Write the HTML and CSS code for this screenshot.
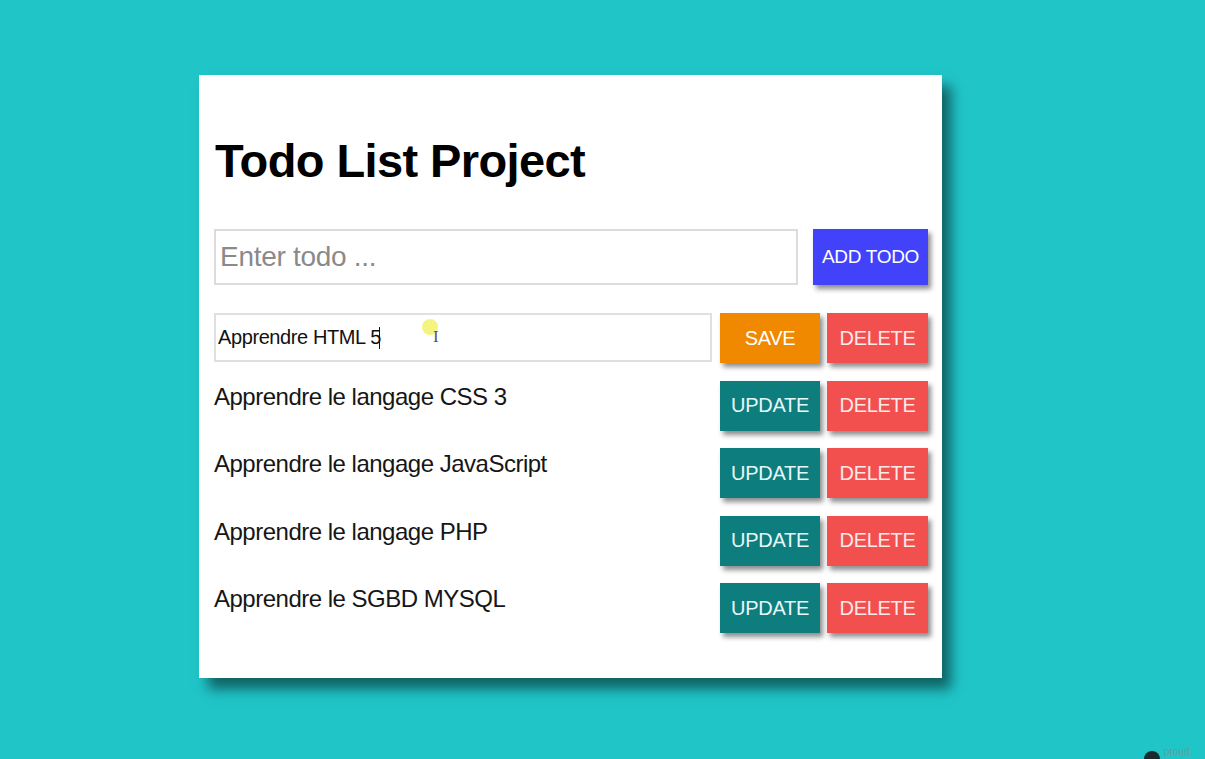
FILE: index.html
```html
<!DOCTYPE html>
<html lang="fr">
<head>
<meta charset="utf-8">
<title>Todo List Project</title>
<link rel="stylesheet" href="styles.css">
</head>
<body>
  <main class="card">
    <h1 class="title">Todo List Project</h1>
    <form class="add-row">
      <input class="add-input" type="text" placeholder="Enter todo ...">
      <button class="btn btn-add" type="button">ADD TODO</button>
    </form>
    <ul class="list">
      <li class="row">
        <div class="edit-wrap">
          <input class="edit-input" type="text" value="Apprendre HTML 5">
          <span class="caret"></span>
          <span class="cursor-dot"></span>
          <span class="ibeam">I</span>
        </div>
        <div class="actions">
          <button class="btn btn-save" type="button">SAVE</button>
          <button class="btn btn-delete" type="button">DELETE</button>
        </div>
      </li>
      <li class="row">
        <span class="item-text">Apprendre le langage CSS 3</span>
        <div class="actions">
          <button class="btn btn-update" type="button">UPDATE</button>
          <button class="btn btn-delete" type="button">DELETE</button>
        </div>
      </li>
      <li class="row">
        <span class="item-text">Apprendre le langage JavaScript</span>
        <div class="actions">
          <button class="btn btn-update" type="button">UPDATE</button>
          <button class="btn btn-delete" type="button">DELETE</button>
        </div>
      </li>
      <li class="row">
        <span class="item-text">Apprendre le langage PHP</span>
        <div class="actions">
          <button class="btn btn-update" type="button">UPDATE</button>
          <button class="btn btn-delete" type="button">DELETE</button>
        </div>
      </li>
      <li class="row">
        <span class="item-text">Apprendre le SGBD MYSQL</span>
        <div class="actions">
          <button class="btn btn-update" type="button">UPDATE</button>
          <button class="btn btn-delete" type="button">DELETE</button>
        </div>
      </li>
    </ul>
  </main>
  <div class="watermark"><span class="wm-dot"></span><span class="wm-text">proud</span></div>
</body>
</html>
```

FILE: styles.css
```css
* {
  box-sizing: border-box;
}

html, body {
  margin: 0;
  height: 100%;
}

body {
  background: #20c5c8;
  font-family: "Liberation Sans", Arial, sans-serif;
  color: #111;
  padding: 75px 0 0 199px;
  overflow: hidden;
  position: relative;
}

.card {
  width: 743px;
  background: #fff;
  padding: 55px 14px 45px 15px;
  box-shadow: 9px 11px 12px rgba(0, 0, 0, 0.5);
}

.title {
  margin: 0 0 37px 1px;
  font-size: 47px;
  line-height: 62px;
  letter-spacing: -0.6px;
  font-weight: bold;
  color: #000;
}

.add-row {
  display: flex;
  gap: 15px;
  margin: 0 0 28px 0;
}

.add-input {
  flex: 0 0 584px;
  height: 56px;
  border: 2px solid #dcdcdc;
  padding: 0 4px;
  font-family: inherit;
  font-size: 28px;
  letter-spacing: -0.3px;
  color: #222;
  outline: none;
}

.add-input::placeholder {
  color: #8a8a8a;
}

.btn {
  border: none;
  color: #fff;
  font-family: inherit;
  font-size: 20px;
  letter-spacing: -0.3px;
  height: 50px;
  padding: 0;
  box-shadow: 3px 4px 5px rgba(0, 0, 0, 0.45);
  cursor: pointer;
}

.btn-add {
  width: 115px;
  height: 56px;
  background: #4242fb;
  font-size: 19px;
}

.list {
  list-style: none;
  margin: 0;
  padding: 0;
  display: flex;
  flex-direction: column;
  gap: 17.5px;
}

.row {
  display: flex;
  align-items: flex-start;
  justify-content: space-between;
  height: 50px;
}

.edit-wrap {
  position: relative;
  width: 498px;
}

.edit-input {
  width: 498px;
  height: 49px;
  border: 2px solid #e0e0e0;
  padding: 0 2px;
  font-family: inherit;
  font-size: 20px;
  letter-spacing: -0.4px;
  color: #111;
  outline: none;
}

.caret {
  position: absolute;
  left: 165px;
  top: 14px;
  width: 1px;
  height: 22px;
  background: #111;
}

.cursor-dot {
  position: absolute;
  left: 208px;
  top: 6px;
  width: 16px;
  height: 16px;
  border-radius: 50%;
  background: rgba(240, 240, 90, 0.75);
}

.ibeam {
  position: absolute;
  left: 219px;
  top: 14px;
  font-family: "Liberation Serif", serif;
  font-size: 17px;
  color: #555;
}

.item-text {
  font-size: 24px;
  line-height: 31px;
  letter-spacing: -0.5px;
  color: #161616;
}

.actions {
  display: flex;
  gap: 7px;
}

.btn-save {
  width: 100px;
  background: #f08800;
}

.btn-delete {
  width: 101px;
  background: #f2504f;
  color: #ffe9e9;
}

.btn-update {
  width: 100px;
  background: #0e7d7e;
  color: #e6f7f7;
}

.watermark {
  position: absolute;
  left: 1144px;
  top: 746px;
  display: flex;
  align-items: flex-start;
  gap: 4px;
}

.wm-dot {
  margin-top: 5px;
  width: 16px;
  height: 16px;
  border-radius: 50%;
  background: #1b2a2d;
}

.wm-text {
  font-family: "Liberation Sans", sans-serif;
  font-size: 10px;
  line-height: 12px;
  color: #6d9a9b;
}
```
